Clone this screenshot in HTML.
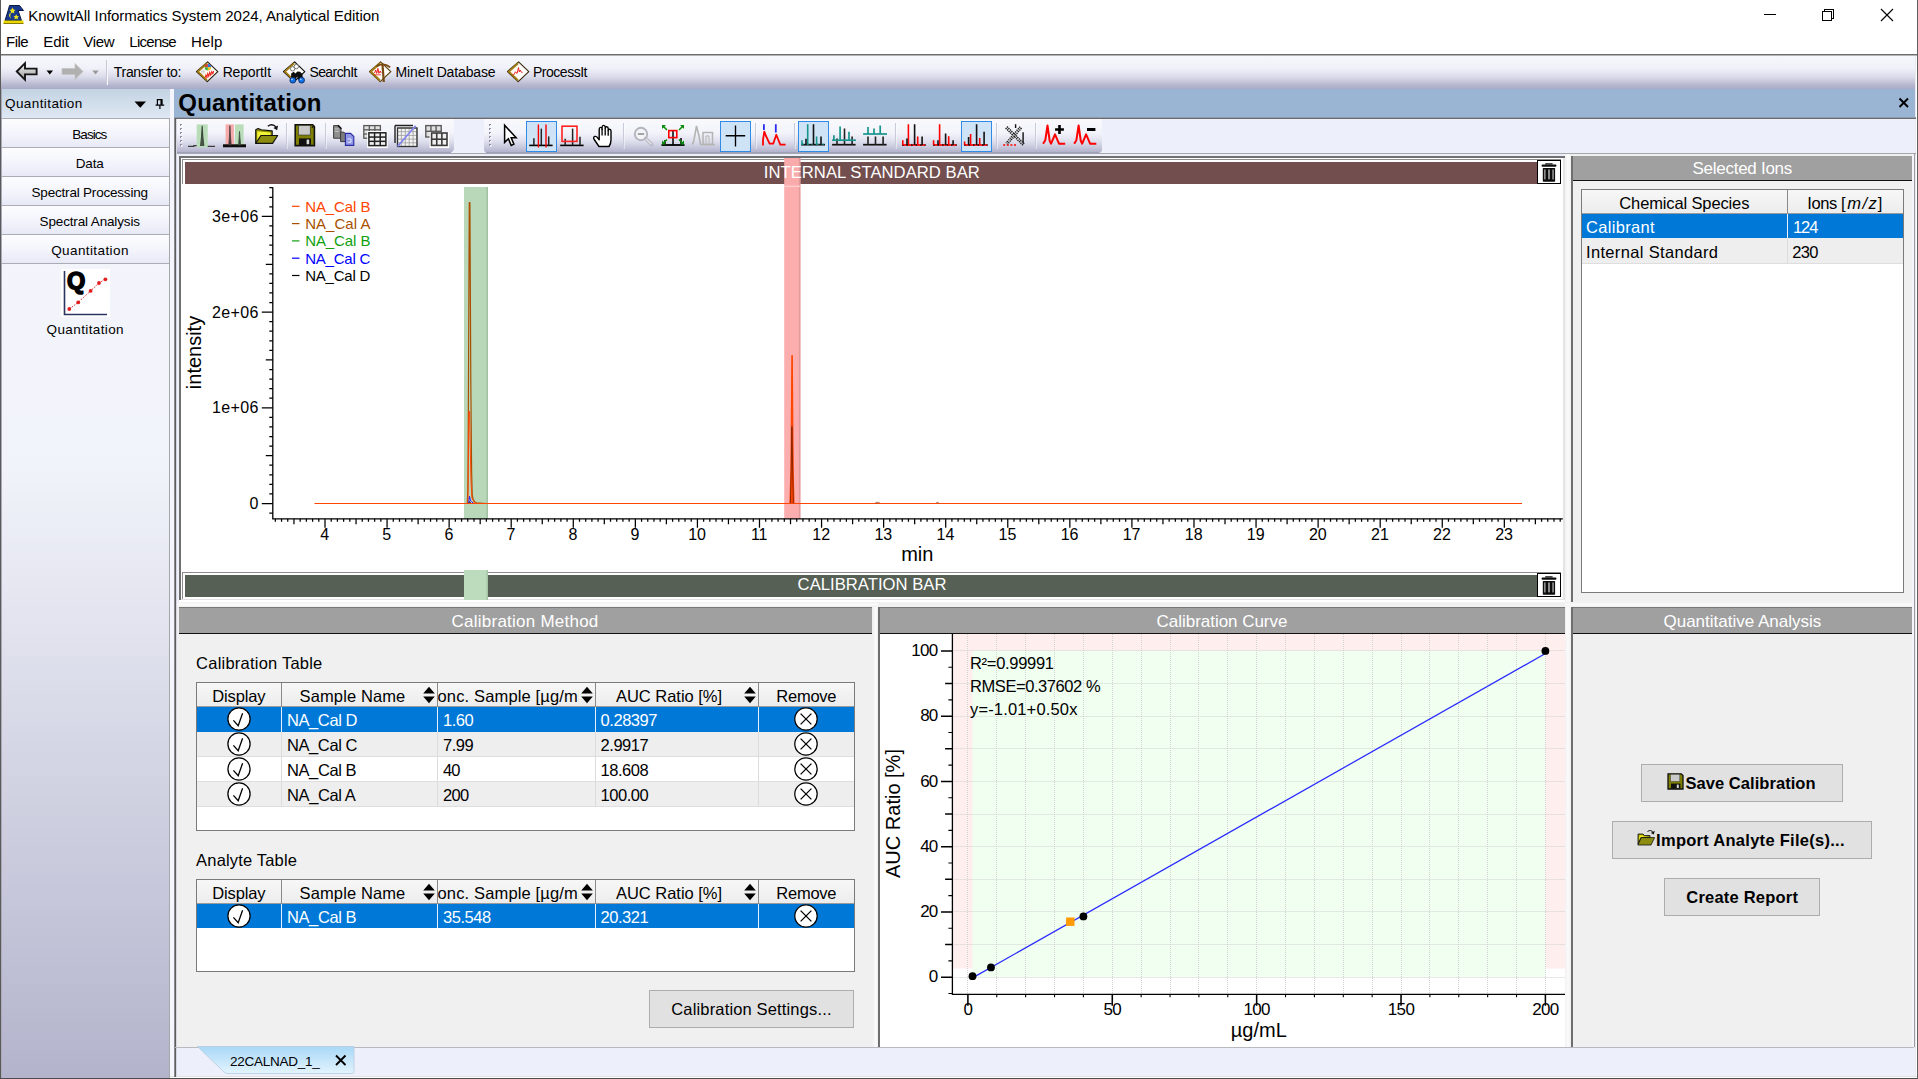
<!DOCTYPE html>
<html lang="en"><head><meta charset="utf-8"><title>KnowItAll Informatics System 2024, Analytical Edition</title>
<style>
html,body{margin:0;padding:0;}
body{width:1918px;height:1079px;overflow:hidden;position:relative;background:#fff;font-family:"Liberation Sans",sans-serif;}
.b{position:absolute;display:block;}
.t{position:absolute;white-space:pre;line-height:normal;font-family:"Liberation Sans",sans-serif;}
svg text{font-family:"Liberation Sans",sans-serif;}
</style></head>
<body>
<div class="b" style="left:0px;top:0px;width:1918px;height:54px;background:#ffffff;"></div>
<svg class="b" style="left:2px;top:3px;" width="24" height="22" viewBox="0 0 24 22">
<path d="M7.5 2.5 L17.5 2.5 L21.5 7.5 L16 7.5 L19.5 17.5 L3 17.5 L6 8 Z" fill="#17388c" stroke="#0a173f" stroke-width="1"/>
<path d="M1.5 17.5 H21.5 V20.5 H1.5 Z" fill="#e8d800"/>
<path d="M1.5 20 H21.5 V21 H1.5 Z" fill="#8a7a00"/>
<path d="M10.5 4.6 l1 2 2 .3 -1.5 1.4 .4 2.1 -1.9 -1 -1.9 1 .4 -2.1 -1.5 -1.4 2 -.3z" fill="#f2e41a"/>
<path d="M7.5 10.5 q-1.5 3.5 2.2 5.3 q-2.6 -2.2 -0.6 -5.3z" fill="#f2e41a"/>
<path d="M14.2 11.2 l.9 1.8 1.9 .2 -1.4 1.3 .4 2 -1.8 -1 -1.8 1 .4 -2 -1.4 -1.3 1.9 -.2z" fill="#f2e41a"/>
</svg>
<span class="t" style="left:28.30px;top:6.80px;font-size:15px;color:#000;letter-spacing:-0.048px;">KnowItAll Informatics System 2024, Analytical Edition</span>
<svg class="b" style="left:1750px;top:0px;" width="168" height="30" viewBox="0 0 168 30">
<path d="M14 14.5 H26" stroke="#000" stroke-width="1" fill="none" shape-rendering="crispEdges"/>
<path d="M72.5 11.5 H81.5 V20.5 H72.5 Z M74.5 11.5 V9.5 H83.5 V18.5 H81.5" stroke="#000" stroke-width="1" fill="none" shape-rendering="crispEdges"/>
<path d="M131 9 L143 21 M143 9 L131 21" stroke="#000" stroke-width="1.1" fill="none"/>
</svg>
<span class="t" style="left:6.00px;top:32.70px;font-size:15px;color:#000;letter-spacing:-0.488px;">File</span>
<span class="t" style="left:43.30px;top:32.70px;font-size:15px;color:#000;letter-spacing:-0.048px;">Edit</span>
<span class="t" style="left:83.30px;top:32.70px;font-size:15px;color:#000;letter-spacing:-0.293px;">View</span>
<span class="t" style="left:129.30px;top:32.70px;font-size:15px;color:#000;letter-spacing:-0.718px;">License</span>
<span class="t" style="left:191.00px;top:32.70px;font-size:15px;color:#000;letter-spacing:0.148px;">Help</span>
<div class="b" style="left:0px;top:54px;width:1918px;height:1px;background:#6e6e6e;"></div>
<div class="b" style="left:0px;top:55px;width:1918px;height:1px;background:#b4b4b4;"></div>
<div class="b" style="left:0px;top:56px;width:1918px;height:33px;background:linear-gradient(#f6f7fc 0%,#f1f2f9 35%,#dcddeb 62%,#b6b7cf 88%,#a9aac6 100%);"></div>
<svg class="b" style="left:12px;top:58px;" width="96" height="28" viewBox="0 0 96 28">
<defs><linearGradient id="ga" x1="0" y1="0" x2="0" y2="1"><stop offset="0" stop-color="#f4f4f4"/><stop offset="1" stop-color="#9a9a9a"/></linearGradient></defs>
<path d="M4.8 13.5 L13 5.2 V10.6 H24.6 V16.4 H13 V21.8 Z" fill="url(#ga)" stroke="#151515" stroke-width="1.9" stroke-linejoin="miter"/>
<path d="M34.5 12.5 h6.5 l-3.25 4z" fill="#000"/>
<path d="M50 10.5 H63 V5.5 L71 13.5 L63 21.5 V16.5 H50 Z" fill="#b0b0b0" stroke="#c4c4c4" stroke-width="0.8"/>
<path d="M80.3 12.5 h6.5 l-3.25 4z" fill="#9a9a9a"/>
</svg>
<div class="b" style="left:106px;top:60px;width:1px;height:25px;background:#c9c9d6;"></div>
<div class="b" style="left:107px;top:60px;width:1px;height:25px;background:#f8f8fc;"></div>
<span class="t" style="left:113.80px;top:63.60px;font-size:14px;color:#000;letter-spacing:-0.306px;">Transfer to:</span>
<svg class="b" style="left:196px;top:60px;" width="23" height="24" viewBox="0 0 23 24"><path d="M11.6 1.9 L21.8 11.6 L11.2 21.6 L0.4 11.6 Z" fill="#fffefa" stroke="#2c2210" stroke-width="1.2" stroke-linejoin="round"/>
<path d="M11.2 3.3 L1.9 11.6 L10.9 20.2" fill="none" stroke="#a47e14" stroke-width="1.9" stroke-linejoin="round"/><path d="M11.9 7.3 V4.1 A3.2 3.2 0 0 0 8.7 7.3Z" fill="#e23a2a"/><path d="M11.9 7.3 H15.1 A3.2 3.2 0 0 0 11.9 4.1Z" fill="#2a72e2"/><path d="M11.9 7.3 H8.7 A3.2 3.2 0 0 0 11.9 10.5Z" fill="#3aae3a"/><path d="M11.9 7.3 V10.5 A3.2 3.2 0 0 0 15.1 7.3Z" fill="#f2c41a"/>
<path d="M5.4 10.2 h3.4 M5.4 11.6 h3.4 M5.4 13 h3.4" stroke="#a4a4a4" stroke-width="0.8" stroke-dasharray="0.9 0.5"/>
<path d="M9.3 17.6 l0.6 -2.4 0.9 2 0.9 -3.6 1 2.6 1 -3.8 1 2.4 1 -3.2 1 1.8 1 -2.4" stroke="#ee2a22" stroke-width="1.1" fill="none"/><path d="M9.6 18.6 L18.4 12.6" stroke="#ee2a22" stroke-width="0.8" stroke-dasharray="1 0.8"/></svg>
<svg class="b" style="left:283px;top:60px;" width="23" height="24" viewBox="0 0 23 24"><path d="M11.6 1.9 L21.8 11.6 L11.2 21.6 L0.4 11.6 Z" fill="#fffefa" stroke="#0c0c0c" stroke-width="1.2" stroke-linejoin="round"/>
<path d="M11.2 3.3 L1.9 11.6 L10.9 20.2" fill="none" stroke="#a47e14" stroke-width="1.9" stroke-linejoin="round"/><circle cx="9.6" cy="8.8" r="2.2" fill="#fff" stroke="#777" stroke-width="1"/><circle cx="13.3" cy="6.6" r="2.2" fill="#fff" stroke="#777" stroke-width="1"/>
<path d="M8.2 13.4 L10.6 11.8 L12.4 13.6 L14.4 11.6 L17 11.8 L19.4 14 L20 20 L15.6 20 L14 16.6 L12.8 20 L8 20 Z" fill="#0c0c0c"/>
<circle cx="9.8" cy="20.2" r="2.9" fill="#1470e6" stroke="#04245c" stroke-width="0.8"/><circle cx="18.6" cy="20.2" r="2.9" fill="#1470e6" stroke="#04245c" stroke-width="0.8"/>
<circle cx="9" cy="19.3" r="0.9" fill="#a8ccff"/><circle cx="17.8" cy="19.3" r="0.9" fill="#a8ccff"/></svg>
<svg class="b" style="left:369px;top:60px;" width="23" height="24" viewBox="0 0 23 24"><path d="M11.6 1.9 L21.8 11.6 L11.2 21.6 L0.4 11.6 Z" fill="#fffefa" stroke="#5c400e" stroke-width="1.2" stroke-linejoin="round"/>
<path d="M11.2 3.3 L1.9 11.6 L10.9 20.2" fill="none" stroke="#a47e14" stroke-width="1.9" stroke-linejoin="round"/><path d="M5.5 13 l1.2 -3 1 3.4 1.2 -5 1 5 1.3 -2.4 1 2" stroke="#e22" stroke-width="1" fill="none"/>
<path d="M5 14.8 h7" stroke="#e22" stroke-width="0.8"/>
<path d="M13.4 3.6 L14.8 22" stroke="#7a4a10" stroke-width="2.2"/>
<path d="M7.5 6.6 Q14 1.9 21.2 7.2" stroke="#7a4a10" stroke-width="1.8" fill="none"/></svg>
<svg class="b" style="left:507px;top:60px;" width="23" height="24" viewBox="0 0 23 24"><path d="M11.6 1.9 L21.8 11.6 L11.2 21.6 L0.4 11.6 Z" fill="#fffefa" stroke="#3c2c10" stroke-width="1.2" stroke-linejoin="round"/>
<path d="M11.2 3.3 L1.9 11.6 L10.9 20.2" fill="none" stroke="#a47e14" stroke-width="1.9" stroke-linejoin="round"/><path d="M5.5 15 q1.5 .5 2.2 -2 q.8 -2.6 1.8 .2 q.6 1.4 1.2 -2.4 l.8 -3.2 .8 4.4 1 -2 1 2.2 1.2 .2" stroke="#e22" stroke-width="1" fill="none"/></svg>
<span class="t" style="left:222.70px;top:63.60px;font-size:14px;color:#000;letter-spacing:-0.185px;">ReportIt</span>
<span class="t" style="left:309.40px;top:63.60px;font-size:14px;color:#000;letter-spacing:-0.577px;">SearchIt</span>
<span class="t" style="left:395.60px;top:63.60px;font-size:14px;color:#000;letter-spacing:-0.139px;">MineIt Database</span>
<span class="t" style="left:533.00px;top:63.60px;font-size:14px;color:#000;letter-spacing:-0.482px;">ProcessIt</span>
<div class="b" style="left:170px;top:89px;width:1748px;height:990px;background:#edeffb;"></div>
<div class="b" style="left:0px;top:89px;width:170px;height:989px;background:linear-gradient(#f3f6fb 0px,#f1f3fa 380px,#b3b4cc 989px);"></div>
<div class="b" style="left:1px;top:89px;width:169px;height:29px;background:linear-gradient(#c3d3e3,#dfe8f3);"></div>
<span class="t" style="left:5.00px;top:96.30px;font-size:13.5px;color:#000;letter-spacing:0.409px;">Quantitation</span>
<svg class="b" style="left:133px;top:96px;" width="34" height="16" viewBox="0 0 34 16"><path d="M1.5 5.5 h11.5 l-5.75 6.2z" fill="#000"/>
<path d="M24.4 3.6 h4.6 v5.4 h-4.6z M22.6 9.2 h8.6 M26.9 9.2 v3.8" stroke="#000" stroke-width="1.2" fill="none"/><path d="M28.3 3.6 v5.4" stroke="#000" stroke-width="1.7"/></svg>
<div class="b" style="left:1px;top:118px;width:169px;height:1px;background:#a9abb5;"></div>
<div class="b" style="left:1px;top:119px;width:169px;height:28px;background:linear-gradient(#fdfdff,#f4f5fc 50%,#e7e9f6);"></div>
<span class="t" style="left:72.30px;top:126.60px;font-size:13.5px;color:#000;letter-spacing:-0.952px;">Basics</span>
<div class="b" style="left:1px;top:147px;width:169px;height:1px;background:#a9abb5;"></div>
<div class="b" style="left:1px;top:148px;width:169px;height:28px;background:linear-gradient(#fdfdff,#f4f5fc 50%,#e7e9f6);"></div>
<span class="t" style="left:75.80px;top:155.60px;font-size:13.5px;color:#000;letter-spacing:-0.175px;">Data</span>
<div class="b" style="left:1px;top:176px;width:169px;height:1px;background:#a9abb5;"></div>
<div class="b" style="left:1px;top:177px;width:169px;height:28px;background:linear-gradient(#fdfdff,#f4f5fc 50%,#e7e9f6);"></div>
<span class="t" style="left:31.55px;top:184.60px;font-size:13.5px;color:#000;letter-spacing:-0.198px;">Spectral Processing</span>
<div class="b" style="left:1px;top:205px;width:169px;height:1px;background:#a9abb5;"></div>
<div class="b" style="left:1px;top:206px;width:169px;height:28px;background:linear-gradient(#fdfdff,#f4f5fc 50%,#e7e9f6);"></div>
<span class="t" style="left:39.55px;top:213.60px;font-size:13.5px;color:#000;letter-spacing:-0.144px;">Spectral Analysis</span>
<div class="b" style="left:1px;top:234px;width:169px;height:1px;background:#a9abb5;"></div>
<div class="b" style="left:1px;top:235px;width:169px;height:28px;background:linear-gradient(#fdfdff,#f4f5fc 50%,#e7e9f6);"></div>
<span class="t" style="left:51.15px;top:242.60px;font-size:13.5px;color:#000;letter-spacing:0.409px;">Quantitation</span>
<div class="b" style="left:1px;top:263px;width:169px;height:1px;background:#a9abb5;"></div>
<svg class="b" style="left:61px;top:269px;" width="49" height="48" viewBox="0 0 49 48"><rect x="0" y="0" width="49" height="48" fill="#fff"/>
<path d="M3.5 2 V45.5 H46" stroke="#2a3560" stroke-width="1.6" fill="none"/>
<path d="M8.3 40 L17.2 33.4 L29.6 21.9 L38 14 L44.4 10.3" stroke="#e02020" stroke-width="1" stroke-dasharray="1.5 1.5" fill="none"/>
<circle cx="8.3" cy="40" r="1.9" fill="#e02020"/><circle cx="17.2" cy="33.4" r="1.9" fill="#e02020"/><circle cx="29.6" cy="21.9" r="1.9" fill="#e02020"/><circle cx="38" cy="14" r="1.9" fill="#e02020"/><circle cx="44.4" cy="10.3" r="1.9" fill="#e02020"/>
<text x="6" y="20.2" font-size="23.5" font-weight="700" fill="#000" stroke="#000" stroke-width="1.5">Q</text></svg>
<span class="t" style="left:46.60px;top:321.60px;font-size:13.5px;color:#000;letter-spacing:0.381px;">Quantitation</span>
<div class="b" style="left:0px;top:0px;width:1px;height:1079px;background:#5a5a5a;"></div>
<div class="b" style="left:1px;top:89px;width:1px;height:989px;background:#a9abb8;"></div>
<div class="b" style="left:169px;top:118px;width:1px;height:960px;background:#a6a8a8;"></div>
<div class="b" style="left:170px;top:89px;width:4px;height:989px;background:#f5f5fd;"></div>
<div class="b" style="left:174px;top:89px;width:1742px;height:28px;background:#9ab4d3;"></div>
<span class="t" style="left:178.30px;top:88.50px;font-size:24px;color:#000;letter-spacing:0.172px;font-weight:700;">Quantitation</span>
<svg class="b" style="left:1897px;top:96px;" width="14" height="14" viewBox="0 0 14 14"><path d="M2.5 2.5 L11 11 M11 2.5 L2.5 11" stroke="#000" stroke-width="1.9" fill="none"/></svg>
<div class="b" style="left:170px;top:1076px;width:1747px;height:1px;background:#e2e2e4;"></div>
<div class="b" style="left:170px;top:1077px;width:1747px;height:1px;background:#fdfdfd;"></div>
<div class="b" style="left:0px;top:1078px;width:1918px;height:1px;background:#4c4c4c;"></div>
<div class="b" style="left:1915px;top:56px;width:1px;height:1020px;background:#e8e8ee;"></div>
<div class="b" style="left:1916px;top:56px;width:1px;height:1020px;background:#ffffff;"></div>
<div class="b" style="left:1917px;top:0px;width:1px;height:1079px;background:#606060;"></div>
<div class="b" style="left:174px;top:117px;width:1742px;height:1px;background:#8f9bb0;"></div>
<div class="b" style="left:175px;top:118px;width:1741px;height:1px;background:#6b6b6b;"></div>
<div class="b" style="left:174px;top:118px;width:1px;height:959px;background:#8c8c90;"></div>
<div class="b" style="left:175px;top:118px;width:1px;height:959px;background:#5e5e5e;"></div>
<div class="b" style="left:176px;top:119px;width:1px;height:958px;background:#d6d6e0;"></div>
<div class="b" style="left:177px;top:119px;width:276.5px;height:34px;background:linear-gradient(#f9f9fd 0%,#f3f4fa 40%,#dfe0ee 65%,#c0c1d7 88%,#adaec8 100%);border-radius:0 0 5px 0;"></div>
<div class="b" style="left:484px;top:119px;width:618px;height:34px;background:linear-gradient(#f9f9fd 0%,#f3f4fa 40%,#dfe0ee 65%,#c0c1d7 88%,#adaec8 100%);border-radius:0 0 4px 4px;"></div>
<div class="b" style="left:177px;top:152px;width:274px;height:1px;background:#9fa0bd;"></div>
<div class="b" style="left:486px;top:152px;width:613px;height:1px;background:#9fa0bd;"></div>
<div class="b" style="left:177px;top:153px;width:1739px;height:1px;background:#a6a9ab;"></div>
<svg class="b" style="left:180px;top:124px;" width="3" height="24" viewBox="0 0 3 24"><rect x="0" y="0" width="2" height="2" fill="#8e8ea4"/><rect x="1" y="1" width="1.5" height="1.5" fill="#fff"/><rect x="0" y="4" width="2" height="2" fill="#8e8ea4"/><rect x="1" y="5" width="1.5" height="1.5" fill="#fff"/><rect x="0" y="8" width="2" height="2" fill="#8e8ea4"/><rect x="1" y="9" width="1.5" height="1.5" fill="#fff"/><rect x="0" y="12" width="2" height="2" fill="#8e8ea4"/><rect x="1" y="13" width="1.5" height="1.5" fill="#fff"/><rect x="0" y="16" width="2" height="2" fill="#8e8ea4"/><rect x="1" y="17" width="1.5" height="1.5" fill="#fff"/><rect x="0" y="20" width="2" height="2" fill="#8e8ea4"/><rect x="1" y="21" width="1.5" height="1.5" fill="#fff"/></svg>
<svg class="b" style="left:489px;top:124px;" width="3" height="24" viewBox="0 0 3 24"><rect x="0" y="0" width="2" height="2" fill="#8e8ea4"/><rect x="1" y="1" width="1.5" height="1.5" fill="#fff"/><rect x="0" y="4" width="2" height="2" fill="#8e8ea4"/><rect x="1" y="5" width="1.5" height="1.5" fill="#fff"/><rect x="0" y="8" width="2" height="2" fill="#8e8ea4"/><rect x="1" y="9" width="1.5" height="1.5" fill="#fff"/><rect x="0" y="12" width="2" height="2" fill="#8e8ea4"/><rect x="1" y="13" width="1.5" height="1.5" fill="#fff"/><rect x="0" y="16" width="2" height="2" fill="#8e8ea4"/><rect x="1" y="17" width="1.5" height="1.5" fill="#fff"/><rect x="0" y="20" width="2" height="2" fill="#8e8ea4"/><rect x="1" y="21" width="1.5" height="1.5" fill="#fff"/></svg>
<div class="b" style="left:286px;top:123px;width:1px;height:26px;background:#c9cada;"></div>
<div class="b" style="left:287px;top:123px;width:1px;height:26px;background:rgba(255,255,255,0.45);"></div>
<div class="b" style="left:325px;top:123px;width:1px;height:26px;background:#c9cada;"></div>
<div class="b" style="left:326px;top:123px;width:1px;height:26px;background:rgba(255,255,255,0.45);"></div>
<div class="b" style="left:623px;top:123px;width:1px;height:26px;background:#c9cada;"></div>
<div class="b" style="left:624px;top:123px;width:1px;height:26px;background:rgba(255,255,255,0.45);"></div>
<div class="b" style="left:755px;top:123px;width:1px;height:26px;background:#c9cada;"></div>
<div class="b" style="left:756px;top:123px;width:1px;height:26px;background:rgba(255,255,255,0.45);"></div>
<div class="b" style="left:794px;top:123px;width:1px;height:26px;background:#c9cada;"></div>
<div class="b" style="left:795px;top:123px;width:1px;height:26px;background:rgba(255,255,255,0.45);"></div>
<div class="b" style="left:895px;top:123px;width:1px;height:26px;background:#c9cada;"></div>
<div class="b" style="left:896px;top:123px;width:1px;height:26px;background:rgba(255,255,255,0.45);"></div>
<div class="b" style="left:996px;top:123px;width:1px;height:26px;background:#c9cada;"></div>
<div class="b" style="left:997px;top:123px;width:1px;height:26px;background:rgba(255,255,255,0.45);"></div>
<div class="b" style="left:1035px;top:123px;width:1px;height:26px;background:#c9cada;"></div>
<div class="b" style="left:1036px;top:123px;width:1px;height:26px;background:rgba(255,255,255,0.45);"></div>
<div class="b" style="left:526px;top:121px;width:31px;height:31px;background:#cfe3f6;border:1px solid #2f8be6;box-sizing:border-box;"></div>
<div class="b" style="left:720px;top:121px;width:31px;height:31px;background:#cfe3f6;border:1px solid #2f8be6;box-sizing:border-box;"></div>
<div class="b" style="left:798px;top:121px;width:31px;height:31px;background:#cfe3f6;border:1px solid #2f8be6;box-sizing:border-box;"></div>
<div class="b" style="left:961px;top:121px;width:31px;height:31px;background:#cfe3f6;border:1px solid #2f8be6;box-sizing:border-box;"></div>
<svg class="b" style="left:190px;top:124px;overflow:visible;" width="24" height="24" viewBox="0 0 24 24"><rect x="6.7" y="0.4" width="11" height="23" fill="#b9dcb9"/>
<path d="M-2 22.4 H3.8 V21.6 H6.7 M17.7 22.4 H25" stroke="#3c3c3c" stroke-width="1.2" fill="none"/>
<path d="M10.6 22 L11.6 12 L12.2 2 L12.8 12 L13.8 22" stroke="#3e4a3e" stroke-width="1.1" fill="#4a554a" stroke-linejoin="round"/></svg>
<svg class="b" style="left:223px;top:124px;overflow:visible;" width="24" height="24" viewBox="0 0 24 24"><rect x="2.6" y="0.4" width="8.3" height="21" fill="#f6abab"/><rect x="12" y="0.4" width="8.6" height="21" fill="#b9dcb9"/>
<path d="M0 21.8 H23" stroke="#0c0c0c" stroke-width="3"/>
<path d="M5.8 21 L6.6 10 L6.9 1.6 L7.3 10 L8.2 21Z" fill="#4a3a3a" stroke="#4a3a3a" stroke-width="0.8"/><path d="M15.6 21 L16.2 13 L16.5 7.4 L16.9 13 L17.6 21Z" fill="#3e4a3e" stroke="#3e4a3e" stroke-width="0.8"/></svg>
<svg class="b" style="left:255px;top:124px;overflow:visible;" width="24" height="24" viewBox="0 0 24 24"><path d="M0.7 19.4 V5.8 L3.2 4.5 L6.3 5.8 L17.2 6.9 V11" fill="#8a8a00" stroke="#111" stroke-width="1.1" stroke-linejoin="round"/>
<path d="M2.2 7.2 L15.6 8.6 V11.2 L6 11.8 L2.2 17.2Z" fill="#f2f236"/>
<path d="M0.7 19.4 L5.9 11.5 H22.7 L17.6 19.4Z" fill="#8c8c10" stroke="#111" stroke-width="1.1" stroke-linejoin="round"/>
<path d="M12.8 2.2 Q17.4 -1.2 21.4 3.4" stroke="#111" stroke-width="1.3" fill="none"/><path d="M23 1.4 L22.2 6.2 L18.4 4Z" fill="#111"/></svg>
<svg class="b" style="left:294px;top:124px;overflow:visible;" width="24" height="24" viewBox="0 0 24 24"><path d="M1.2 0.8 H18.6 L20.4 2.6 V21.6 H1.2Z" fill="#7e7e00" stroke="#111" stroke-width="1.6"/>
<rect x="4.6" y="1.6" width="11.6" height="9.4" fill="#c9c9c9" stroke="#333" stroke-width="0.6"/>
<rect x="5" y="14.4" width="12" height="6.8" fill="#111"/><rect x="12.6" y="15.6" width="2.6" height="4.6" fill="#dcdcdc"/>
<rect x="17.8" y="2.4" width="1.3" height="1.5" fill="#111"/></svg>
<svg class="b" style="left:333px;top:124px;overflow:visible;" width="24" height="24" viewBox="0 0 24 24"><path d="M0.6 1.6 H5.4 L8 4.2 V14.2 H0.6Z" fill="#8e8e8e" stroke="#3a3a3a" stroke-width="1"/><path d="M1.8 5 h4 M1.8 7.4 h4" stroke="#c8c8c8" stroke-width="1"/><path d="M5 1.4 L8.4 4.8" stroke="#111" stroke-width="1.6"/>
<path d="M7.6 8.2 H11 L13.2 10.4 V17.6 H7.6Z" fill="#7c7c7c" stroke="#3a3a3a" stroke-width="1"/>
<path d="M12.4 9.4 H17.6 L20.8 12.6 V21.4 H12.4Z" fill="#9098e4" stroke="#2a2aa4" stroke-width="1.1"/><path d="M14.6 15 h3.4 v3.2 h-3.4" fill="none" stroke="#e4e6ff" stroke-width="1"/></svg>
<svg class="b" style="left:363px;top:124px;overflow:visible;" width="24" height="24" viewBox="0 0 24 24"><rect x="0.8" y="1.6" width="16.6" height="12.6" fill="#e2e2e2" stroke="#5a5a5a" stroke-width="1.3"/><path d="M6.33333 1.6 v12.6" stroke="#5a5a5a" stroke-width="1.3"/><path d="M11.8667 1.6 v12.6" stroke="#5a5a5a" stroke-width="1.3"/><path d="M0.8 5.8 h16.6" stroke="#5a5a5a" stroke-width="1.3"/><path d="M0.8 10 h16.6" stroke="#5a5a5a" stroke-width="1.3"/><rect x="4.2" y="7" width="20.4" height="17" fill="#fff"/><rect x="5.9" y="8.8" width="17" height="12.8" fill="#f0f0f0" stroke="#222" stroke-width="1.5"/><path d="M11.5667 8.8 v12.8" stroke="#222" stroke-width="1.5"/><path d="M17.2333 8.8 v12.8" stroke="#222" stroke-width="1.5"/><path d="M5.9 13.0667 h17" stroke="#222" stroke-width="1.5"/><path d="M5.9 17.3333 h17" stroke="#222" stroke-width="1.5"/></svg>
<svg class="b" style="left:394px;top:124px;overflow:visible;" width="24" height="24" viewBox="0 0 24 24"><path d="M1 1.5 H19 M1 1.5 V19" stroke="#222" stroke-width="1.4" fill="none"/><rect x="3.5" y="4" width="19.5" height="18.5" fill="#f4f4f4" stroke="#9a9a9a" stroke-width="0.8"/><path d="M7.4 4 v18.5" stroke="#9a9a9a" stroke-width="0.8"/><path d="M11.3 4 v18.5" stroke="#9a9a9a" stroke-width="0.8"/><path d="M15.2 4 v18.5" stroke="#9a9a9a" stroke-width="0.8"/><path d="M19.1 4 v18.5" stroke="#9a9a9a" stroke-width="0.8"/><path d="M3.5 7.7 h19.5" stroke="#9a9a9a" stroke-width="0.8"/><path d="M3.5 11.4 h19.5" stroke="#9a9a9a" stroke-width="0.8"/><path d="M3.5 15.1 h19.5" stroke="#9a9a9a" stroke-width="0.8"/><path d="M3.5 18.8 h19.5" stroke="#9a9a9a" stroke-width="0.8"/><rect x="3.5" y="4" width="19.5" height="18.5" fill="none" stroke="#333" stroke-width="1.3"/><path d="M3.6 22.4 L21.6 1.8" stroke="#8585f2" stroke-width="1.7"/></svg>
<svg class="b" style="left:425px;top:124px;overflow:visible;" width="24" height="24" viewBox="0 0 24 24"><rect x="0.8" y="1.6" width="15.4" height="11.4" fill="#e0e0e0" stroke="#5a5a5a" stroke-width="1.4"/><path d="M5.93333 1.6 v11.4" stroke="#5a5a5a" stroke-width="1.4"/><path d="M11.0667 1.6 v11.4" stroke="#5a5a5a" stroke-width="1.4"/><path d="M0.8 7.3 h15.4" stroke="#5a5a5a" stroke-width="1.4"/><rect x="4.6" y="8" width="19.6" height="16" fill="#fff"/><rect x="6.6" y="9" width="15.4" height="12.4" fill="#f0f0f0" stroke="#3a3a3a" stroke-width="1.6"/><path d="M11.7333 9 v12.4" stroke="#3a3a3a" stroke-width="1.6"/><path d="M16.8667 9 v12.4" stroke="#3a3a3a" stroke-width="1.6"/><path d="M6.6 15.2 h15.4" stroke="#3a3a3a" stroke-width="1.6"/></svg>
<svg class="b" style="left:503px;top:124px;overflow:visible;" width="24" height="24" viewBox="0 0 24 24"><path d="M1.6 1.2 V18.4 L5.4 14.8 L8.2 21.4 L10.9 20.2 L8.2 13.8 L13.2 13.8 Z" fill="#fff" stroke="#000" stroke-width="1.5" stroke-linejoin="miter"/></svg>
<svg class="b" style="left:529px;top:124px;overflow:visible;" width="24" height="24" viewBox="0 0 24 24"><path d="M0.2 21.4 H23.6" stroke="#000" stroke-width="1.6"/><path d="M4.9 21.4 v-7.1" stroke="#222" stroke-width="1.5"/><path d="M12.3 21.4 v-16.8" stroke="#222" stroke-width="1.5"/><path d="M19.7 21.4 v-9" stroke="#222" stroke-width="1.5"/><path d="M9.4 0.4 V23.6 M17 0.4 V23.6" stroke="#f00" stroke-width="1.4"/></svg>
<svg class="b" style="left:560px;top:124px;overflow:visible;" width="24" height="24" viewBox="0 0 24 24"><path d="M0.2 21.4 H23.6" stroke="#000" stroke-width="1.6"/><path d="M5.2 21.4 v-6.7" stroke="#222" stroke-width="1.5"/><path d="M12.6 21.4 v-16.8" stroke="#222" stroke-width="1.5"/><path d="M20 21.4 v-8.6" stroke="#222" stroke-width="1.5"/><rect x="2" y="2.2" width="15" height="15.2" fill="none" stroke="#f22" stroke-width="1.6"/></svg>
<svg class="b" style="left:592px;top:124px;overflow:visible;" width="24" height="24" viewBox="0 0 24 24"><path d="M7 22.5 L2.2 15.5 Q0.8 13.2 2.8 12.4 Q4.4 12 5.8 14 L7.2 15.8 V5.2 Q7.2 3.4 8.7 3.4 Q10.1 3.4 10.1 5.2 V3.2 Q10.1 1.4 11.7 1.4 Q13.2 1.4 13.2 3.2 V4.4 Q13.2 2.8 14.7 2.8 Q16.2 2.8 16.2 4.6 V6.6 Q16.2 5.2 17.6 5.2 Q19 5.2 19 7 V16 Q19 19.5 17 22.5 Z" fill="#fff" stroke="#000" stroke-width="1.4" stroke-linejoin="round"/>
<path d="M10.1 5 V11.5 M13.2 4.5 V11.5 M16.2 6.5 V11.8" stroke="#000" stroke-width="1.3"/></svg>
<svg class="b" style="left:632px;top:124px;overflow:visible;" width="24" height="24" viewBox="0 0 24 24"><circle cx="9" cy="10" r="6.2" fill="#f4f4f8" stroke="#b4b4be" stroke-width="1.9"/><path d="M5.8 10 H12.2" stroke="#a4a4a4" stroke-width="2"/>
<path d="M13.6 14.6 L19.6 20.6" stroke="#b9b9c4" stroke-width="3.6" stroke-linecap="round"/><path d="M14 15 L19.4 20.4" stroke="#e8e8ee" stroke-width="1.3"/></svg>
<svg class="b" style="left:661px;top:124px;overflow:visible;" width="24" height="24" viewBox="0 0 24 24"><path d="M0.5 21 H23.5" stroke="#000" stroke-width="1.8"/><path d="M4 21 v-5 M12 21 V6 M20 21 v-7" stroke="#000" stroke-width="1.5"/>
<rect x="7.8" y="6.6" width="8" height="7" fill="none" stroke="#f00" stroke-width="1.6"/>
<g stroke="#0a8a0a" stroke-width="1.5" fill="#0a8a0a"><path d="M6 6 L1.5 1.5 M18 6 L22.5 1.5 M6 15.5 L1.5 20 M18 15.5 L22.5 20" fill="none"/><path d="M1 1 h4 l-4 4z M23 1 h-4 l4 4z M1 20.5 v-4 l4 4z M23 20.5 v-4 l-4 4z" stroke="none"/></g></svg>
<svg class="b" style="left:692px;top:124px;overflow:visible;" width="24" height="24" viewBox="0 0 24 24"><path d="M0.5 20.5 L2 16 L4.5 2 L7 12 L8.5 20.5 M8.5 20.5 H23" stroke="#b4b4b4" stroke-width="1.6" fill="none"/>
<rect x="11" y="8.5" width="9.5" height="12" fill="none" stroke="#b4b4b4" stroke-width="1.5"/><path d="M14 12 v8 M17 12 v8 M14 12 h3" stroke="#c0c0c0" stroke-width="1.3" fill="none"/></svg>
<svg class="b" style="left:724px;top:124px;overflow:visible;" width="24" height="24" viewBox="0 0 24 24"><path d="M11.5 1.5 V22.4 M1.7 11.7 H21.2" stroke="#000" stroke-width="1.35"/></svg>
<svg class="b" style="left:762px;top:124px;overflow:visible;" width="24" height="24" viewBox="0 0 24 24"><path d="M1 21.5 V16 L2.3 7.6 L4 12 L7.6 19.7 H11.2 L14.3 10.8 L15.6 14 L18.3 20.6 H23.6" stroke="#f00" stroke-width="1.8" fill="none" stroke-linejoin="round"/><path d="M1.9 0.2 V6 M13.8 0.2 V8.6" stroke="#2a2af0" stroke-width="1.8"/></svg>
<svg class="b" style="left:801px;top:124px;overflow:visible;" width="24" height="24" viewBox="0 0 24 24"><path d="M0.1 20.7 H24" stroke="#111" stroke-width="1.7"/><path d="M0.1 20.2 H24" stroke="#17958c" stroke-width="0.9" stroke-dasharray="3 2"/><path d="M1 20.7 V16.2 M6.7 20.7 V0.2 M15.6 20.7 V12.6" stroke="#17958c" stroke-width="1.6" fill="none"/><path d="M5 20.7 V14.8 M12.5 20.7 V0.2 M20 20.7 V12.6" stroke="#111" stroke-width="1.6" fill="none"/></svg>
<svg class="b" style="left:832px;top:124px;overflow:visible;" width="24" height="24" viewBox="0 0 24 24"><path d="M0.1 20.7 H23.6" stroke="#111" stroke-width="1.7"/><path d="M5 20.7 V14.4 M12.5 20.7 V4.6 M20.1 20.7 V12.6" stroke="#222" stroke-width="1.6" fill="none"/><path d="M0.1 16.2 H23.9" stroke="#17958c" stroke-width="1.7"/><path d="M1.9 16.2 V11.3 M8.1 16.2 V2.4 M17 16.2 V7.7" stroke="#17958c" stroke-width="1.7" fill="none"/></svg>
<svg class="b" style="left:863px;top:124px;overflow:visible;" width="24" height="24" viewBox="0 0 24 24"><path d="M0.1 20.7 H23.6" stroke="#111" stroke-width="1.7"/><path d="M5 20.7 V12.6 M12.5 20.7 V12.6 M20.1 20.7 V12.6" stroke="#222" stroke-width="1.6" fill="none"/><path d="M0.1 10 H24" stroke="#17958c" stroke-width="1.7"/><path d="M5 10 V2.9 M11 10 V4.6 M17.2 10 V1.5" stroke="#17958c" stroke-width="1.7" fill="none"/></svg>
<svg class="b" style="left:902px;top:124px;overflow:visible;" width="24" height="24" viewBox="0 0 24 24"><path d="M0.1 21 H23.6" stroke="#ff0000" stroke-width="1.7"/><path d="M0.1 21 H23.6" stroke="#111" stroke-width="1.7" stroke-dasharray="1.5 3"/><path d="M0.8 21 V16.2 M6.4 21 V0.2 M15.7 21 V12.6" stroke="#ff0000" stroke-width="1.6" fill="none"/><path d="M5 21 V14.4 M12.6 21 V0.2 M20.1 21 V12.6" stroke="#111" stroke-width="1.6" fill="none"/></svg>
<svg class="b" style="left:933px;top:124px;overflow:visible;" width="24" height="24" viewBox="0 0 24 24"><path d="M0.1 21 H23.6" stroke="#ff0000" stroke-width="1.7"/><path d="M0.1 21 H23.6" stroke="#111" stroke-width="1.7" stroke-dasharray="1.5 3"/><path d="M0.6 21 V16.2 M6.6 21 V0.2 M15.7 21 V12.2" stroke="#ff0000" stroke-width="1.6" fill="none"/><path d="M5 21 V16.2 M12.6 21 V9.5 M20.1 21 V16.2" stroke="#111" stroke-width="1.6" fill="none"/></svg>
<svg class="b" style="left:964px;top:124px;overflow:visible;" width="24" height="24" viewBox="0 0 24 24"><path d="M0.1 21 H23.6" stroke="#ff0000" stroke-width="1.7"/><path d="M0.1 21 H23.6" stroke="#111" stroke-width="1.7" stroke-dasharray="1.5 3"/><path d="M0.6 21 V17.5 M6.6 21 V10 M15.7 21 V14" stroke="#ff0000" stroke-width="1.6" fill="none"/><path d="M4.6 21 V13 M12.6 21 V0.2 M20.1 21 V7.7" stroke="#111" stroke-width="1.6" fill="none"/></svg>
<svg class="b" style="left:1002px;top:124px;overflow:visible;" width="24" height="24" viewBox="0 0 24 24"><path d="M1.2 21 H15.4" stroke="#f00" stroke-width="1.6" stroke-dasharray="2 1.6"/><path d="M13.6 0.2 V4 M21.1 8.2 V19.7" stroke="#111" stroke-width="1.4"/>
<path d="M4.3 3.3 L21.6 20.6 M18.9 3.3 L4.7 19.7" stroke="#262626" stroke-width="3.4" stroke-dasharray="1.3 0.8"/><path d="M4.3 3.3 L21.6 20.6 M18.9 3.3 L4.7 19.7" stroke="#f4f4f4" stroke-width="0.9" stroke-dasharray="1 1.1"/></svg>
<svg class="b" style="left:1042px;top:124px;overflow:visible;" width="24" height="24" viewBox="0 0 24 24"><path d="M1.1 19.7 L3.3 16.2 L5.5 1.5 L7.7 17 L9.1 19.7 L13 10.4 L15.7 16.6 L17 19.7 H23.2" stroke="#f00" stroke-width="2" fill="none" stroke-linejoin="round"/><path d="M13.1 5.5 H21.9 M17.5 1.1 V9.9" stroke="#000" stroke-width="2.6"/></svg>
<svg class="b" style="left:1074px;top:124px;overflow:visible;" width="24" height="24" viewBox="0 0 24 24"><path d="M0.2 19.7 L2.4 16.2 L4.6 1.5 L6.8 17 L8.2 19.7 L12.1 10.4 L14.8 16.6 L16.1 19.7 H22.3" stroke="#f00" stroke-width="2" fill="none" stroke-linejoin="round"/><path d="M13 5.5 H21.4" stroke="#000" stroke-width="3"/></svg>
<div class="b" style="left:177px;top:602px;width:696px;height:445px;background:#f0f0f0;"></div>
<div class="b" style="left:179px;top:607px;width:693px;height:27px;background:#a0a0a0;"></div><div class="b" style="left:179px;top:607px;width:693px;height:1px;background:#777777;"></div><div class="b" style="left:179px;top:632.6px;width:693px;height:1.4px;background:#111;"></div><span class="t" style="left:451.60px;top:611.80px;font-size:17px;color:#fff;letter-spacing:0.235px;">Calibration Method</span>
<span class="t" style="left:196.10px;top:654.00px;font-size:16.5px;color:#000;letter-spacing:0.224px;">Calibration Table</span>
<div class="b" style="left:196px;top:682px;width:659px;height:149px;background:#fff;border:1px solid #7a7a7a;box-sizing:border-box;"></div>
<div class="b" style="left:197px;top:683px;width:657px;height:23.5px;background:linear-gradient(#f7f7f7,#ececec);"></div>
<div class="b" style="left:197px;top:705.7px;width:657px;height:1px;background:#9a9a9a;"></div>
<div class="b" style="left:281px;top:683px;width:1px;height:23.5px;background:#8a8a8a;"></div>
<div class="b" style="left:437px;top:683px;width:1px;height:23.5px;background:#8a8a8a;"></div>
<div class="b" style="left:595px;top:683px;width:1px;height:23.5px;background:#8a8a8a;"></div>
<div class="b" style="left:758px;top:683px;width:1px;height:23.5px;background:#8a8a8a;"></div>
<span class="t" style="left:212.30px;top:686.60px;font-size:16.5px;color:#000;letter-spacing:-0.151px;">Display</span>
<span class="t" style="left:299.60px;top:686.60px;font-size:16.5px;color:#000;letter-spacing:0.116px;">Sample Name</span>
<svg class="b" style="left:421.8px;top:686px;" width="14" height="18" viewBox="0 0 14 18"><path d="M1.2 7.6 L7 0.8 L12.8 7.6Z M1.2 10.6 L7 17.2 L12.8 10.6Z" fill="#000"/></svg>
<div class="b" style="left:438px;top:683px;width:141.2px;height:22.5px;overflow:hidden;"><span class="t" style="left:-12.60px;top:3.60px;font-size:16.5px;color:#000;letter-spacing:0.154px;">Conc. Sample [µg/mL]</span></div>
<svg class="b" style="left:580.2px;top:686px;" width="14" height="18" viewBox="0 0 14 18"><path d="M1.2 7.6 L7 0.8 L12.8 7.6Z M1.2 10.6 L7 17.2 L12.8 10.6Z" fill="#000"/></svg>
<span class="t" style="left:616.00px;top:686.60px;font-size:16.5px;color:#000;letter-spacing:-0.030px;">AUC Ratio [%]</span>
<svg class="b" style="left:742.5px;top:686px;" width="14" height="18" viewBox="0 0 14 18"><path d="M1.2 7.6 L7 0.8 L12.8 7.6Z M1.2 10.6 L7 17.2 L12.8 10.6Z" fill="#000"/></svg>
<span class="t" style="left:776.30px;top:686.60px;font-size:16.5px;color:#000;letter-spacing:-0.249px;">Remove</span>
<div class="b" style="left:197px;top:706.5px;width:657px;height:25px;background:#0078d7;"></div>
<div class="b" style="left:281px;top:706.5px;width:1px;height:25px;background:#e8f1fb;"></div>
<div class="b" style="left:437px;top:706.5px;width:1px;height:25px;background:#e8f1fb;"></div>
<div class="b" style="left:595px;top:706.5px;width:1px;height:25px;background:#e8f1fb;"></div>
<div class="b" style="left:758px;top:706.5px;width:1px;height:25px;background:#e8f1fb;"></div>
<svg class="b" style="left:226.5px;top:706.9px;" width="24" height="24" viewBox="0 0 24 24"><circle cx="12" cy="12" r="11.1" fill="#fff" stroke="#000" stroke-width="1.25"/><path d="M6.4 13.4 L11.2 18.8 L15.6 6.2" fill="none" stroke="#000" stroke-width="1.3"/></svg>
<span class="t" style="left:287.00px;top:710.90px;font-size:16.5px;color:#fff;letter-spacing:-0.409px;">NA_Cal D</span>
<span class="t" style="left:443.00px;top:710.90px;font-size:16.5px;color:#fff;letter-spacing:-0.501px;">1.60</span>
<span class="t" style="left:600.60px;top:710.90px;font-size:16.5px;color:#fff;letter-spacing:-0.468px;">0.28397</span>
<svg class="b" style="left:794px;top:706.9px;" width="24" height="24" viewBox="0 0 24 24"><circle cx="12" cy="12" r="11.2" fill="#fff" stroke="#000" stroke-width="1.25"/><path d="M6.6 6.6 L17.4 17.4 M17.4 6.6 L6.6 17.4" fill="none" stroke="#000" stroke-width="1.3"/></svg>
<div class="b" style="left:197px;top:731.5px;width:657px;height:25px;background:#eeeeee;"></div>
<div class="b" style="left:197px;top:755.9px;width:657px;height:0.8px;background:#dedede;"></div>
<div class="b" style="left:281px;top:731.5px;width:1px;height:25px;background:#dcdcdc;"></div>
<div class="b" style="left:437px;top:731.5px;width:1px;height:25px;background:#dcdcdc;"></div>
<div class="b" style="left:595px;top:731.5px;width:1px;height:25px;background:#dcdcdc;"></div>
<div class="b" style="left:758px;top:731.5px;width:1px;height:25px;background:#dcdcdc;"></div>
<svg class="b" style="left:226.5px;top:731.9px;" width="24" height="24" viewBox="0 0 24 24"><circle cx="12" cy="12" r="11.1" fill="#fff" stroke="#000" stroke-width="1.25"/><path d="M6.4 13.4 L11.2 18.8 L15.6 6.2" fill="none" stroke="#000" stroke-width="1.3"/></svg>
<span class="t" style="left:287.00px;top:735.90px;font-size:16.5px;color:#000;letter-spacing:-0.409px;">NA_Cal C</span>
<span class="t" style="left:443.00px;top:735.90px;font-size:16.5px;color:#000;letter-spacing:-0.501px;">7.99</span>
<span class="t" style="left:600.60px;top:735.90px;font-size:16.5px;color:#000;letter-spacing:-0.476px;">2.9917</span>
<svg class="b" style="left:794px;top:731.9px;" width="24" height="24" viewBox="0 0 24 24"><circle cx="12" cy="12" r="11.2" fill="#fff" stroke="#000" stroke-width="1.25"/><path d="M6.6 6.6 L17.4 17.4 M17.4 6.6 L6.6 17.4" fill="none" stroke="#000" stroke-width="1.3"/></svg>
<div class="b" style="left:197px;top:756.5px;width:657px;height:25px;background:#fff;"></div>
<div class="b" style="left:197px;top:780.9px;width:657px;height:0.8px;background:#dedede;"></div>
<div class="b" style="left:281px;top:756.5px;width:1px;height:25px;background:#dcdcdc;"></div>
<div class="b" style="left:437px;top:756.5px;width:1px;height:25px;background:#dcdcdc;"></div>
<div class="b" style="left:595px;top:756.5px;width:1px;height:25px;background:#dcdcdc;"></div>
<div class="b" style="left:758px;top:756.5px;width:1px;height:25px;background:#dcdcdc;"></div>
<svg class="b" style="left:226.5px;top:756.9px;" width="24" height="24" viewBox="0 0 24 24"><circle cx="12" cy="12" r="11.1" fill="#fff" stroke="#000" stroke-width="1.25"/><path d="M6.4 13.4 L11.2 18.8 L15.6 6.2" fill="none" stroke="#000" stroke-width="1.3"/></svg>
<span class="t" style="left:287.00px;top:760.90px;font-size:16.5px;color:#000;letter-spacing:-0.404px;">NA_Cal B</span>
<span class="t" style="left:443.00px;top:760.90px;font-size:16.5px;color:#000;letter-spacing:-0.857px;">40</span>
<span class="t" style="left:600.60px;top:760.90px;font-size:16.5px;color:#000;letter-spacing:-0.476px;">18.608</span>
<svg class="b" style="left:794px;top:756.9px;" width="24" height="24" viewBox="0 0 24 24"><circle cx="12" cy="12" r="11.2" fill="#fff" stroke="#000" stroke-width="1.25"/><path d="M6.6 6.6 L17.4 17.4 M17.4 6.6 L6.6 17.4" fill="none" stroke="#000" stroke-width="1.3"/></svg>
<div class="b" style="left:197px;top:781.5px;width:657px;height:25px;background:#eeeeee;"></div>
<div class="b" style="left:197px;top:805.9px;width:657px;height:0.8px;background:#dedede;"></div>
<div class="b" style="left:281px;top:781.5px;width:1px;height:25px;background:#dcdcdc;"></div>
<div class="b" style="left:437px;top:781.5px;width:1px;height:25px;background:#dcdcdc;"></div>
<div class="b" style="left:595px;top:781.5px;width:1px;height:25px;background:#dcdcdc;"></div>
<div class="b" style="left:758px;top:781.5px;width:1px;height:25px;background:#dcdcdc;"></div>
<svg class="b" style="left:226.5px;top:781.9px;" width="24" height="24" viewBox="0 0 24 24"><circle cx="12" cy="12" r="11.1" fill="#fff" stroke="#000" stroke-width="1.25"/><path d="M6.4 13.4 L11.2 18.8 L15.6 6.2" fill="none" stroke="#000" stroke-width="1.3"/></svg>
<span class="t" style="left:287.00px;top:785.90px;font-size:16.5px;color:#000;letter-spacing:-0.397px;">NA_Cal A</span>
<span class="t" style="left:443.00px;top:785.90px;font-size:16.5px;color:#000;letter-spacing:-0.643px;">200</span>
<span class="t" style="left:600.60px;top:785.90px;font-size:16.5px;color:#000;letter-spacing:-0.476px;">100.00</span>
<svg class="b" style="left:794px;top:781.9px;" width="24" height="24" viewBox="0 0 24 24"><circle cx="12" cy="12" r="11.2" fill="#fff" stroke="#000" stroke-width="1.25"/><path d="M6.6 6.6 L17.4 17.4 M17.4 6.6 L6.6 17.4" fill="none" stroke="#000" stroke-width="1.3"/></svg>
<span class="t" style="left:196.10px;top:850.70px;font-size:16.5px;color:#000;letter-spacing:0.178px;">Analyte Table</span>
<div class="b" style="left:196px;top:879px;width:659px;height:93px;background:#fff;border:1px solid #7a7a7a;box-sizing:border-box;"></div>
<div class="b" style="left:197px;top:880px;width:657px;height:23.5px;background:linear-gradient(#f7f7f7,#ececec);"></div>
<div class="b" style="left:197px;top:902.7px;width:657px;height:1px;background:#9a9a9a;"></div>
<div class="b" style="left:281px;top:880px;width:1px;height:23.5px;background:#8a8a8a;"></div>
<div class="b" style="left:437px;top:880px;width:1px;height:23.5px;background:#8a8a8a;"></div>
<div class="b" style="left:595px;top:880px;width:1px;height:23.5px;background:#8a8a8a;"></div>
<div class="b" style="left:758px;top:880px;width:1px;height:23.5px;background:#8a8a8a;"></div>
<span class="t" style="left:212.30px;top:883.60px;font-size:16.5px;color:#000;letter-spacing:-0.151px;">Display</span>
<span class="t" style="left:299.60px;top:883.60px;font-size:16.5px;color:#000;letter-spacing:0.116px;">Sample Name</span>
<svg class="b" style="left:421.8px;top:883px;" width="14" height="18" viewBox="0 0 14 18"><path d="M1.2 7.6 L7 0.8 L12.8 7.6Z M1.2 10.6 L7 17.2 L12.8 10.6Z" fill="#000"/></svg>
<div class="b" style="left:438px;top:880px;width:141.2px;height:22.5px;overflow:hidden;"><span class="t" style="left:-12.60px;top:3.60px;font-size:16.5px;color:#000;letter-spacing:0.154px;">Conc. Sample [µg/mL]</span></div>
<svg class="b" style="left:580.2px;top:883px;" width="14" height="18" viewBox="0 0 14 18"><path d="M1.2 7.6 L7 0.8 L12.8 7.6Z M1.2 10.6 L7 17.2 L12.8 10.6Z" fill="#000"/></svg>
<span class="t" style="left:616.00px;top:883.60px;font-size:16.5px;color:#000;letter-spacing:-0.030px;">AUC Ratio [%]</span>
<svg class="b" style="left:742.5px;top:883px;" width="14" height="18" viewBox="0 0 14 18"><path d="M1.2 7.6 L7 0.8 L12.8 7.6Z M1.2 10.6 L7 17.2 L12.8 10.6Z" fill="#000"/></svg>
<span class="t" style="left:776.30px;top:883.60px;font-size:16.5px;color:#000;letter-spacing:-0.249px;">Remove</span>
<div class="b" style="left:197px;top:903.5px;width:657px;height:24.3px;background:#0078d7;"></div>
<div class="b" style="left:281px;top:903.5px;width:1px;height:24.3px;background:#e8f1fb;"></div>
<div class="b" style="left:437px;top:903.5px;width:1px;height:24.3px;background:#e8f1fb;"></div>
<div class="b" style="left:595px;top:903.5px;width:1px;height:24.3px;background:#e8f1fb;"></div>
<div class="b" style="left:758px;top:903.5px;width:1px;height:24.3px;background:#e8f1fb;"></div>
<svg class="b" style="left:226.5px;top:903.9px;" width="24" height="24" viewBox="0 0 24 24"><circle cx="12" cy="12" r="11.1" fill="#fff" stroke="#000" stroke-width="1.25"/><path d="M6.4 13.4 L11.2 18.8 L15.6 6.2" fill="none" stroke="#000" stroke-width="1.3"/></svg>
<span class="t" style="left:287.00px;top:907.90px;font-size:16.5px;color:#fff;letter-spacing:-0.404px;">NA_Cal B</span>
<span class="t" style="left:443.00px;top:907.90px;font-size:16.5px;color:#fff;letter-spacing:-0.476px;">35.548</span>
<span class="t" style="left:600.60px;top:907.90px;font-size:16.5px;color:#fff;letter-spacing:-0.476px;">20.321</span>
<svg class="b" style="left:794px;top:903.9px;" width="24" height="24" viewBox="0 0 24 24"><circle cx="12" cy="12" r="11.2" fill="#fff" stroke="#000" stroke-width="1.25"/><path d="M6.6 6.6 L17.4 17.4 M17.4 6.6 L6.6 17.4" fill="none" stroke="#000" stroke-width="1.3"/></svg>
<div class="b" style="left:649px;top:990px;width:205px;height:38px;background:#e1e1e1;border:1px solid #adadad;box-sizing:border-box;"></div>
<span class="t" style="left:671.30px;top:999.70px;font-size:16.5px;color:#000;letter-spacing:0.153px;">Calibration Settings...</span>
<div class="b" style="left:873px;top:602px;width:5px;height:445px;background:linear-gradient(90deg,#f0f0f0,#fbfbfb 50%,#f0f0f0);"></div>
<div class="b" style="left:1565px;top:154px;width:6px;height:893px;background:linear-gradient(90deg,#f0f0f0,#fbfbfb 50%,#f0f0f0);"></div>
<div class="b" style="left:177px;top:602px;width:1736px;height:5px;background:linear-gradient(#f0f0f0,#fafafa 50%,#f0f0f0);"></div>
<div class="b" style="left:1571px;top:154px;width:342px;height:448px;background:#f0f0f0;"></div>
<div class="b" style="left:1571px;top:156px;width:1.6px;height:446px;background:#6e6e6e;"></div>
<div class="b" style="left:1572.6px;top:156px;width:339.4px;height:25.2px;background:#a0a0a0;"></div><div class="b" style="left:1572.6px;top:179.8px;width:339.4px;height:1.4px;background:#111;"></div><span class="t" style="left:1692.50px;top:158.80px;font-size:17px;color:#fff;letter-spacing:-0.268px;">Selected Ions</span>
<div class="b" style="left:1581px;top:189px;width:322.5px;height:403.5px;background:#fff;border:1px solid #7a7a7a;box-sizing:border-box;"></div>
<div class="b" style="left:1582px;top:190px;width:320.5px;height:23.5px;background:linear-gradient(#f7f7f7,#ececec);"></div>
<div class="b" style="left:1582px;top:212.8px;width:320.5px;height:1px;background:#9a9a9a;"></div>
<div class="b" style="left:1787px;top:190px;width:1px;height:23px;background:#8a8a8a;"></div>
<span class="t" style="left:1619.30px;top:193.80px;font-size:16.5px;color:#000;letter-spacing:-0.130px;">Chemical Species</span>
<span class="t" style="left:1807.20px;top:193.80px;font-size:16.5px;color:#000;letter-spacing:-0.372px;">Ions [</span>
<span class="t" style="left:1847.30px;top:193.80px;font-size:16.5px;color:#000;letter-spacing:1.459px;font-style:italic;">m/z</span>
<span class="t" style="left:1877.80px;top:193.80px;font-size:16.5px;color:#000;">]</span>
<div class="b" style="left:1582px;top:213.5px;width:320.5px;height:24.5px;background:#0078d7;"></div>
<div class="b" style="left:1787px;top:213.5px;width:1px;height:24.5px;background:#e8f1fb;"></div>
<span class="t" style="left:1586.00px;top:217.60px;font-size:16.5px;color:#fff;letter-spacing:0.321px;">Calibrant</span>
<span class="t" style="left:1793.00px;top:217.60px;font-size:16.5px;color:#fff;letter-spacing:-1.061px;">124</span>
<div class="b" style="left:1582px;top:238px;width:320.5px;height:25.4px;background:#eeeeee;"></div>
<div class="b" style="left:1582px;top:263px;width:320.5px;height:0.8px;background:#dedede;"></div>
<div class="b" style="left:1787px;top:238px;width:1px;height:25.4px;background:#dcdcdc;"></div>
<span class="t" style="left:1586.00px;top:242.90px;font-size:16.5px;color:#000;letter-spacing:0.338px;">Internal Standard</span>
<span class="t" style="left:1792.30px;top:242.90px;font-size:16.5px;color:#000;letter-spacing:-0.761px;">230</span>
<div class="b" style="left:1571px;top:607px;width:342px;height:440px;background:#f0f0f0;"></div>
<div class="b" style="left:1571px;top:607px;width:1.6px;height:440px;background:#6e6e6e;"></div>
<div class="b" style="left:1572.6px;top:607px;width:339.4px;height:27px;background:#a0a0a0;"></div><div class="b" style="left:1572.6px;top:607px;width:339.4px;height:1px;background:#777777;"></div><div class="b" style="left:1572.6px;top:632.6px;width:339.4px;height:1.4px;background:#111;"></div><span class="t" style="left:1663.50px;top:611.80px;font-size:17px;color:#fff;letter-spacing:-0.006px;">Quantitative Analysis</span>
<div class="b" style="left:1641px;top:764px;width:202px;height:38px;background:#e1e1e1;border:1px solid #adadad;box-sizing:border-box;"></div>
<div class="b" style="left:1612px;top:821px;width:260px;height:38px;background:#e1e1e1;border:1px solid #adadad;box-sizing:border-box;"></div>
<div class="b" style="left:1664px;top:878px;width:156px;height:38px;background:#e1e1e1;border:1px solid #adadad;box-sizing:border-box;"></div>
<span class="t" style="left:1685.40px;top:773.90px;font-size:16.5px;color:#000;letter-spacing:0.060px;font-weight:700;">Save Calibration</span>
<span class="t" style="left:1656.10px;top:831.00px;font-size:16.5px;color:#000;letter-spacing:0.274px;font-weight:700;">Import Analyte File(s)...</span>
<span class="t" style="left:1686.30px;top:887.80px;font-size:16.5px;color:#000;letter-spacing:0.207px;font-weight:700;">Create Report</span>
<svg class="b" style="left:1666.5px;top:773px;" width="17" height="17" viewBox="0 0 17 17"><path d="M1 0.8 H14.2 L16 2.6 V16 H1Z" fill="#7e7e00" stroke="#111" stroke-width="1.3"/>
<rect x="3.6" y="1.4" width="9.2" height="7" fill="#c9c9c9" stroke="#444" stroke-width="0.5"/><rect x="4" y="10.6" width="9.4" height="5" fill="#111"/><rect x="9.8" y="11.6" width="2" height="3.4" fill="#d8d8d8"/></svg>
<svg class="b" style="left:1637px;top:829px;" width="19" height="18" viewBox="0 0 19 18"><path d="M1 5 H6 L7.5 6.5 H13 V8.5 H4 L1 15Z" fill="#8a8a00" stroke="#111" stroke-width="0.8"/>
<path d="M4.3 8.6 H17.6 L14 16 H0.8Z" fill="#8c8c10" stroke="#111" stroke-width="0.8"/><path d="M2.4 6.2 H5.6 L7 7.6 H10 V8 H3.6 L1.8 11.6Z" fill="#eded20"/>
<path d="M10.5 2.5 Q14 0 16.5 3.8" stroke="#111" stroke-width="1" fill="none"/><path d="M17.8 1.8 L16.8 5.6 L13.8 3.9Z" fill="#111"/></svg>
<div class="b" style="left:1914px;top:153px;width:1px;height:894px;background:#9c9ca4;"></div>
<div class="b" style="left:1912px;top:154px;width:2px;height:893px;background:#f4f4fa;"></div>
<div class="b" style="left:175px;top:1047px;width:1739px;height:1px;background:#b9b9c0;"></div>
<svg class="b" style="left:190px;top:1046px;" width="175" height="30" viewBox="0 0 175 30"><defs><linearGradient id="tg" x1="0" y1="0" x2="0" y2="1"><stop offset="0" stop-color="#a9d8f7"/><stop offset="1" stop-color="#e3f4fd"/></linearGradient></defs>
<path d="M7.5 0.5 H164 V25.5 Q164 27.5 162 27.5 H38 Q35.5 27.5 33.5 25.5 Z" fill="url(#tg)" stroke="#b5cbe0" stroke-width="0.8"/>
<path d="M146 9.5 L155.5 19 M155.5 9.5 L146 19" stroke="#000" stroke-width="1.9" fill="none"/></svg>
<span class="t" style="left:230.00px;top:1054.30px;font-size:13.5px;color:#000;letter-spacing:-0.246px;">22CALNAD_1_</span>
<div class="b" style="left:878px;top:603px;width:687px;height:444px;background:#ffffff;"></div>
<div class="b" style="left:878px;top:603px;width:687px;height:4px;background:#f0f0f0;"></div>
<div class="b" style="left:878.3px;top:607px;width:1.7px;height:440px;background:#6e6e6e;"></div>
<div class="b" style="left:880px;top:607px;width:685px;height:27px;background:#a0a0a0;"></div><div class="b" style="left:880px;top:607px;width:685px;height:1px;background:#777777;"></div><div class="b" style="left:880px;top:632.6px;width:685px;height:1.4px;background:#111;"></div><span class="t" style="left:1156.60px;top:611.80px;font-size:17px;color:#fff;letter-spacing:-0.034px;">Calibration Curve</span>
<svg class="b" style="left:880px;top:634px;font-family:'Liberation Sans',sans-serif;" width="685" height="413" viewBox="0 0 685 413"><rect x="73" y="0" width="612" height="334.6" fill="#ffeeee"/>
<rect x="92.52" y="16.95" width="572.88" height="325.87" fill="#f0fff0"/>
<path d="M87.50 0 V360.3 M116.50 0 V360.3 M145.50 0 V360.3 M174.50 0 V360.3 M203.50 0 V360.3 M232.50 0 V360.3 M261.50 0 V360.3 M290.50 0 V360.3 M318.50 0 V360.3 M347.50 0 V360.3 M376.50 0 V360.3 M405.50 0 V360.3 M434.50 0 V360.3 M463.50 0 V360.3 M492.50 0 V360.3 M521.50 0 V360.3 M549.50 0 V360.3 M578.50 0 V360.3 M607.50 0 V360.3 M636.50 0 V360.3 M665.50 0 V360.3 M72.4 343.50 H685 M72.4 310.50 H685 M72.4 277.50 H685 M72.4 245.50 H685 M72.4 212.50 H685 M72.4 180.50 H685 M72.4 147.50 H685 M72.4 114.50 H685 M72.4 82.50 H685 M72.4 49.50 H685 M72.4 16.50 H685" stroke="#d2d2d2" stroke-width="1" stroke-dasharray="1 1" fill="none"/>
<path d="M72.4 0 V360.3 H685" stroke="#000" stroke-width="1.3" fill="none"/>
<path d="M72.4 343.15 h-11.4 M72.4 310.53 h-7.3 M72.4 277.91 h-11.4 M72.4 245.29 h-7.3 M72.4 212.67 h-11.4 M72.4 180.05 h-7.3 M72.4 147.43 h-11.4 M72.4 114.81 h-7.3 M72.4 82.19 h-11.4 M72.4 49.57 h-7.3 M72.4 16.95 h-11.4 M87.90 360.3 v11.4 M232.28 360.3 v11.4 M376.65 360.3 v11.4 M521.03 360.3 v11.4 M665.40 360.3 v11.4" stroke="#000" stroke-width="1.55" fill="none"/>
<path d="M72.4 359.46 h-4 M72.4 326.84 h-4 M72.4 294.22 h-4 M72.4 261.60 h-4 M72.4 228.98 h-4 M72.4 196.36 h-4 M72.4 163.74 h-4 M72.4 131.12 h-4 M72.4 98.50 h-4 M72.4 65.88 h-4 M72.4 33.26 h-4 M116.77 360.3 v3 M145.65 360.3 v3 M174.53 360.3 v3 M203.40 360.3 v3 M261.15 360.3 v3 M290.03 360.3 v3 M318.90 360.3 v3 M347.78 360.3 v3 M405.53 360.3 v3 M434.40 360.3 v3 M463.28 360.3 v3 M492.15 360.3 v3 M549.90 360.3 v3 M578.78 360.3 v3 M607.65 360.3 v3 M636.53 360.3 v3" stroke="#000" stroke-width="1.1" fill="none"/>
<text x="58.30" y="348.45" font-size="17" fill="#000" text-anchor="end" textLength="9.03" lengthAdjust="spacing" >0</text>
<text x="58.30" y="283.21" font-size="17" fill="#000" text-anchor="end" textLength="18.06" lengthAdjust="spacing" >20</text>
<text x="58.30" y="217.97" font-size="17" fill="#000" text-anchor="end" textLength="18.06" lengthAdjust="spacing" >40</text>
<text x="58.30" y="152.73" font-size="17" fill="#000" text-anchor="end" textLength="18.06" lengthAdjust="spacing" >60</text>
<text x="58.30" y="87.49" font-size="17" fill="#000" text-anchor="end" textLength="18.06" lengthAdjust="spacing" >80</text>
<text x="58.30" y="22.25" font-size="17" fill="#000" text-anchor="end" textLength="27.09" lengthAdjust="spacing" >100</text>
<text x="88.20" y="381.40" font-size="17" fill="#000" text-anchor="middle" textLength="9.03" lengthAdjust="spacing" >0</text>
<text x="232.58" y="381.40" font-size="17" fill="#000" text-anchor="middle" textLength="18.06" lengthAdjust="spacing" >50</text>
<text x="376.95" y="381.40" font-size="17" fill="#000" text-anchor="middle" textLength="27.09" lengthAdjust="spacing" >100</text>
<text x="521.33" y="381.40" font-size="17" fill="#000" text-anchor="middle" textLength="27.09" lengthAdjust="spacing" >150</text>
<text x="665.70" y="381.40" font-size="17" fill="#000" text-anchor="middle" textLength="27.09" lengthAdjust="spacing" >200</text>
<text x="378.80" y="403.40" font-size="20" fill="#000" text-anchor="middle" >µg/mL</text>
<text transform="translate(20.3 179.5) rotate(-90)" font-size="20" text-anchor="middle">AUC Ratio [%]</text>
<path d="M92.52 343.84 L665.40 19.56" stroke="#2a2aff" stroke-width="1.25"/>
<rect x="186.10" y="283.50" width="8.4" height="8.4" fill="#ff9a00"/>
<circle cx="92.52" cy="342.22" r="3.9" fill="#000"/>
<circle cx="110.97" cy="333.40" r="3.9" fill="#000"/>
<circle cx="203.40" cy="282.45" r="3.9" fill="#000"/>
<circle cx="665.40" cy="16.95" r="3.9" fill="#000"/></svg>
<span class="t" style="left:970.00px;top:654.40px;font-size:16.5px;color:#000;letter-spacing:-0.299px;">R²=0.99991</span>
<span class="t" style="left:970.00px;top:676.80px;font-size:16.5px;color:#000;letter-spacing:-0.424px;">RMSE=0.37602 %</span>
<span class="t" style="left:970.00px;top:699.60px;font-size:16.5px;color:#000;letter-spacing:0.158px;">y=-1.01+0.50x</span>
<div class="b" style="left:179px;top:156px;width:1386px;height:446px;background:#ffffff;"></div>
<div class="b" style="left:179px;top:156px;width:1386px;height:2px;background:#707070;"></div>
<div class="b" style="left:179px;top:156px;width:2px;height:443.5px;background:#707070;"></div>
<div class="b" style="left:181px;top:599px;width:1384px;height:1px;background:#e2e2e2;"></div>
<div class="b" style="left:1563px;top:158px;width:2px;height:442px;background:#e4e4e4;"></div>
<div class="b" style="left:182px;top:159px;width:1379px;height:1px;background:#8c8c8c;"></div>
<div class="b" style="left:182px;top:159px;width:1px;height:25px;background:#8c8c8c;"></div>
<div class="b" style="left:185px;top:162px;width:1375px;height:21.5px;background:#724e4e;"></div>
<div class="b" style="left:182px;top:572px;width:1379px;height:1px;background:#8c8c8c;"></div>
<div class="b" style="left:182px;top:572px;width:1px;height:26.5px;background:#8c8c8c;"></div>
<div class="b" style="left:185px;top:575px;width:1375px;height:22px;background:#566055;"></div>
<svg class="b" style="left:179px;top:156px;font-family:'Liberation Sans',sans-serif;" width="1386" height="446" viewBox="0 0 1386 446"><rect x="285" y="31" width="24" height="331.8" fill="#b9d8b9"/>
<rect x="307.4" y="31" width="1.6" height="331.8" fill="#a3c2a3"/>
<rect x="605.2" y="28" width="16.2" height="334.8" fill="#fcaeae"/>
<rect x="619.8" y="28" width="1.6" height="334.8" fill="#e09c9c"/>
<rect x="605.2" y="2" width="16.2" height="26" fill="#f9abab"/>
<rect x="619.8" y="2" width="1.6" height="26" fill="#dc9a9a"/>
<rect x="605.2" y="29.8" width="16.2" height="1" fill="#ffd6d6"/>
<rect x="285" y="414" width="24" height="30" fill="#bddcbd"/>
<rect x="307.5" y="414" width="1.5" height="30" fill="#a5c4a5"/>
<path d="M93.8 31.2 V362.8 H1383.8" stroke="#000" stroke-width="1.3" fill="none"/>
<path d="M93.8 357.07 h-3.5 M93.8 347.50 h-11 M93.8 337.93 h-3.5 M93.8 328.36 h-3.5 M93.8 318.79 h-3.5 M93.8 309.22 h-3.5 M93.8 299.65 h-7 M93.8 290.08 h-3.5 M93.8 280.51 h-3.5 M93.8 270.94 h-3.5 M93.8 261.37 h-3.5 M93.8 251.80 h-11 M93.8 242.23 h-3.5 M93.8 232.66 h-3.5 M93.8 223.09 h-3.5 M93.8 213.52 h-3.5 M93.8 203.95 h-7 M93.8 194.38 h-3.5 M93.8 184.81 h-3.5 M93.8 175.24 h-3.5 M93.8 165.67 h-3.5 M93.8 156.10 h-11 M93.8 146.53 h-3.5 M93.8 136.96 h-3.5 M93.8 127.39 h-3.5 M93.8 117.82 h-3.5 M93.8 108.25 h-7 M93.8 98.68 h-3.5 M93.8 89.11 h-3.5 M93.8 79.54 h-3.5 M93.8 69.97 h-3.5 M93.8 60.40 h-11 M93.8 50.83 h-3.5 M93.8 41.26 h-3.5 M93.8 31.69 h-3.5" stroke="#000" stroke-width="1.25" fill="none"/>
<path d="M96.34 362.8 v3 M102.55 362.8 v3 M108.76 362.8 v3 M114.96 362.8 v5.5 M121.17 362.8 v3 M127.38 362.8 v3 M133.59 362.8 v3 M139.79 362.8 v3 M146.00 362.8 v9 M152.21 362.8 v3 M158.41 362.8 v3 M164.62 362.8 v3 M170.83 362.8 v3 M177.04 362.8 v5.5 M183.24 362.8 v3 M189.45 362.8 v3 M195.66 362.8 v3 M201.86 362.8 v3 M208.07 362.8 v9 M214.28 362.8 v3 M220.48 362.8 v3 M226.69 362.8 v3 M232.90 362.8 v3 M239.11 362.8 v5.5 M245.31 362.8 v3 M251.52 362.8 v3 M257.73 362.8 v3 M263.93 362.8 v3 M270.14 362.8 v9 M276.35 362.8 v3 M282.55 362.8 v3 M288.76 362.8 v3 M294.97 362.8 v3 M301.18 362.8 v5.5 M307.38 362.8 v3 M313.59 362.8 v3 M319.80 362.8 v3 M326.00 362.8 v3 M332.21 362.8 v9 M338.42 362.8 v3 M344.62 362.8 v3 M350.83 362.8 v3 M357.04 362.8 v3 M363.25 362.8 v5.5 M369.45 362.8 v3 M375.66 362.8 v3 M381.87 362.8 v3 M388.07 362.8 v3 M394.28 362.8 v9 M400.49 362.8 v3 M406.69 362.8 v3 M412.90 362.8 v3 M419.11 362.8 v3 M425.32 362.8 v5.5 M431.52 362.8 v3 M437.73 362.8 v3 M443.94 362.8 v3 M450.14 362.8 v3 M456.35 362.8 v9 M462.56 362.8 v3 M468.76 362.8 v3 M474.97 362.8 v3 M481.18 362.8 v3 M487.38 362.8 v5.5 M493.59 362.8 v3 M499.80 362.8 v3 M506.01 362.8 v3 M512.21 362.8 v3 M518.42 362.8 v9 M524.63 362.8 v3 M530.83 362.8 v3 M537.04 362.8 v3 M543.25 362.8 v3 M549.45 362.8 v5.5 M555.66 362.8 v3 M561.87 362.8 v3 M568.08 362.8 v3 M574.28 362.8 v3 M580.49 362.8 v9 M586.70 362.8 v3 M592.90 362.8 v3 M599.11 362.8 v3 M605.32 362.8 v3 M611.52 362.8 v5.5 M617.73 362.8 v3 M623.94 362.8 v3 M630.15 362.8 v3 M636.35 362.8 v3 M642.56 362.8 v9 M648.77 362.8 v3 M654.97 362.8 v3 M661.18 362.8 v3 M667.39 362.8 v3 M673.60 362.8 v5.5 M679.80 362.8 v3 M686.01 362.8 v3 M692.22 362.8 v3 M698.42 362.8 v3 M704.63 362.8 v9 M710.84 362.8 v3 M717.04 362.8 v3 M723.25 362.8 v3 M729.46 362.8 v3 M735.66 362.8 v5.5 M741.87 362.8 v3 M748.08 362.8 v3 M754.29 362.8 v3 M760.49 362.8 v3 M766.70 362.8 v9 M772.91 362.8 v3 M779.11 362.8 v3 M785.32 362.8 v3 M791.53 362.8 v3 M797.74 362.8 v5.5 M803.94 362.8 v3 M810.15 362.8 v3 M816.36 362.8 v3 M822.56 362.8 v3 M828.77 362.8 v9 M834.98 362.8 v3 M841.18 362.8 v3 M847.39 362.8 v3 M853.60 362.8 v3 M859.80 362.8 v5.5 M866.01 362.8 v3 M872.22 362.8 v3 M878.43 362.8 v3 M884.63 362.8 v3 M890.84 362.8 v9 M897.05 362.8 v3 M903.25 362.8 v3 M909.46 362.8 v3 M915.67 362.8 v3 M921.88 362.8 v5.5 M928.08 362.8 v3 M934.29 362.8 v3 M940.50 362.8 v3 M946.70 362.8 v3 M952.91 362.8 v9 M959.12 362.8 v3 M965.32 362.8 v3 M971.53 362.8 v3 M977.74 362.8 v3 M983.95 362.8 v5.5 M990.15 362.8 v3 M996.36 362.8 v3 M1002.57 362.8 v3 M1008.77 362.8 v3 M1014.98 362.8 v9 M1021.19 362.8 v3 M1027.39 362.8 v3 M1033.60 362.8 v3 M1039.81 362.8 v3 M1046.01 362.8 v5.5 M1052.22 362.8 v3 M1058.43 362.8 v3 M1064.64 362.8 v3 M1070.84 362.8 v3 M1077.05 362.8 v9 M1083.26 362.8 v3 M1089.46 362.8 v3 M1095.67 362.8 v3 M1101.88 362.8 v3 M1108.09 362.8 v5.5 M1114.29 362.8 v3 M1120.50 362.8 v3 M1126.71 362.8 v3 M1132.91 362.8 v3 M1139.12 362.8 v9 M1145.33 362.8 v3 M1151.53 362.8 v3 M1157.74 362.8 v3 M1163.95 362.8 v3 M1170.15 362.8 v5.5 M1176.36 362.8 v3 M1182.57 362.8 v3 M1188.78 362.8 v3 M1194.98 362.8 v3 M1201.19 362.8 v9 M1207.40 362.8 v3 M1213.60 362.8 v3 M1219.81 362.8 v3 M1226.02 362.8 v3 M1232.22 362.8 v5.5 M1238.43 362.8 v3 M1244.64 362.8 v3 M1250.85 362.8 v3 M1257.05 362.8 v3 M1263.26 362.8 v9 M1269.47 362.8 v3 M1275.67 362.8 v3 M1281.88 362.8 v3 M1288.09 362.8 v3 M1294.30 362.8 v5.5 M1300.50 362.8 v3 M1306.71 362.8 v3 M1312.92 362.8 v3 M1319.12 362.8 v3 M1325.33 362.8 v9 M1331.54 362.8 v3 M1337.74 362.8 v3 M1343.95 362.8 v3 M1350.16 362.8 v3 M1356.37 362.8 v5.5 M1362.57 362.8 v3 M1368.78 362.8 v3 M1374.99 362.8 v3 M1381.19 362.8 v3" stroke="#000" stroke-width="1.25" fill="none"/>
<text x="79.40" y="353.00" font-size="16" fill="#000" text-anchor="end" textLength="9.21" lengthAdjust="spacing" >0</text>
<text x="79.40" y="257.30" font-size="16" fill="#000" text-anchor="end" textLength="46.51" lengthAdjust="spacing" >1e+06</text>
<text x="79.40" y="161.60" font-size="16" fill="#000" text-anchor="end" textLength="46.51" lengthAdjust="spacing" >2e+06</text>
<text x="79.40" y="65.90" font-size="16" fill="#000" text-anchor="end" textLength="46.51" lengthAdjust="spacing" >3e+06</text>
<text x="145.70" y="383.90" font-size="16" fill="#000" text-anchor="middle" >4</text>
<text x="207.77" y="383.90" font-size="16" fill="#000" text-anchor="middle" >5</text>
<text x="269.84" y="383.90" font-size="16" fill="#000" text-anchor="middle" >6</text>
<text x="331.91" y="383.90" font-size="16" fill="#000" text-anchor="middle" >7</text>
<text x="393.98" y="383.90" font-size="16" fill="#000" text-anchor="middle" >8</text>
<text x="456.05" y="383.90" font-size="16" fill="#000" text-anchor="middle" >9</text>
<text x="518.12" y="383.90" font-size="16" fill="#000" text-anchor="middle" >10</text>
<text x="580.19" y="383.90" font-size="16" fill="#000" text-anchor="middle" >11</text>
<text x="642.26" y="383.90" font-size="16" fill="#000" text-anchor="middle" >12</text>
<text x="704.33" y="383.90" font-size="16" fill="#000" text-anchor="middle" >13</text>
<text x="766.40" y="383.90" font-size="16" fill="#000" text-anchor="middle" >14</text>
<text x="828.47" y="383.90" font-size="16" fill="#000" text-anchor="middle" >15</text>
<text x="890.54" y="383.90" font-size="16" fill="#000" text-anchor="middle" >16</text>
<text x="952.61" y="383.90" font-size="16" fill="#000" text-anchor="middle" >17</text>
<text x="1014.68" y="383.90" font-size="16" fill="#000" text-anchor="middle" >18</text>
<text x="1076.75" y="383.90" font-size="16" fill="#000" text-anchor="middle" >19</text>
<text x="1138.82" y="383.90" font-size="16" fill="#000" text-anchor="middle" >20</text>
<text x="1200.89" y="383.90" font-size="16" fill="#000" text-anchor="middle" >21</text>
<text x="1262.96" y="383.90" font-size="16" fill="#000" text-anchor="middle" >22</text>
<text x="1325.03" y="383.90" font-size="16" fill="#000" text-anchor="middle" >23</text>
<text x="738.30" y="404.70" font-size="20" fill="#000" text-anchor="middle" >min</text>
<text transform="translate(22 196.5) rotate(-90)" font-size="20" text-anchor="middle">intensity</text>
<path d="M113 50.3 h7.5" stroke="#ff4500" stroke-width="1.2"/>
<text x="126.20" y="55.75" font-size="15" fill="#ff4500" text-anchor="start" textLength="65.20" lengthAdjust="spacing" >NA_Cal B</text>
<path d="M113 67.6 h7.5" stroke="#a85000" stroke-width="1.2"/>
<text x="126.20" y="73.05" font-size="15" fill="#a85000" text-anchor="start" textLength="65.20" lengthAdjust="spacing" >NA_Cal A</text>
<path d="M113 84.9 h7.5" stroke="#10a010" stroke-width="1.2"/>
<text x="126.20" y="90.35" font-size="15" fill="#10a010" text-anchor="start" textLength="65.20" lengthAdjust="spacing" >NA_Cal B</text>
<path d="M113 102.2 h7.5" stroke="#0000ff" stroke-width="1.2"/>
<text x="126.20" y="107.65" font-size="15" fill="#0000ff" text-anchor="start" textLength="65.20" lengthAdjust="spacing" >NA_Cal C</text>
<path d="M113 119.5 h7.5" stroke="#000000" stroke-width="1.2"/>
<text x="126.20" y="124.95" font-size="15" fill="#000000" text-anchor="start" textLength="65.20" lengthAdjust="spacing" >NA_Cal D</text>
<path d="M288.30 347.50 L288.90 332.50 L289.40 244.50 L290.30 46.50 L290.90 46.50 L291.80 224.50 L292.60 314.50 L293.20 338.50 Q293.80 345.60 297.50 346.80 L307.00 347.50" fill="none" stroke="#a85000" stroke-width="1.2" stroke-linejoin="round"/>
<path d="M288.90 347.50 L289.90 255.50 L290.50 255.50 L291.90 322.50 L292.80 341.50 L295.50 347.10" fill="none" stroke="#ff4500" stroke-width="0.95"/>
<path d="M289.70 347.10 L290.50 340.30 L291.60 345.00 L294.20 347.10" fill="#ffffff" stroke="#1c1cff" stroke-width="1"/>
<path d="M289.90 347.50 L290.60 345.50 L292.00 347.30" fill="none" stroke="#000" stroke-width="0.8"/>
<path d="M610.90 347.50 L611.90 314.50 L612.90 199.50 L613.30 199.50 L614.20 314.50 L615.00 347.50" fill="#ff4500" stroke="#ff4500" stroke-width="1.1" stroke-linejoin="round"/>
<path d="M611.40 347.50 L612.20 314.50 L612.90 270.50 L613.90 324.50 L614.40 347.50" fill="none" stroke="#6a1c00" stroke-width="0.75"/>
<path d="M135.5 347.5 H1343" stroke="#ff4500" stroke-width="1.1"/>
<path d="M696 347.5 l1.5 -1.6 l1.5 1.6" stroke="#a0522d" stroke-width="0.9" fill="none"/>
<path d="M698 347.5 l1.5 -1.6 l1.5 1.6" stroke="#a0522d" stroke-width="0.9" fill="none"/>
<path d="M757 347.5 l1.5 -1.6 l1.5 1.6" stroke="#a0522d" stroke-width="0.9" fill="none"/></svg>
<span class="t" style="left:763.80px;top:163.30px;font-size:16.67px;color:#fff;letter-spacing:0.020px;">INTERNAL STANDARD BAR</span>
<span class="t" style="left:797.60px;top:575.30px;font-size:16.67px;color:#fff;letter-spacing:0.012px;">CALIBRATION BAR</span>
<svg class="b" style="left:1537px;top:160px;" width="24" height="24" viewBox="0 0 24 24"><rect x="0.5" y="0.5" width="23" height="23" fill="#fff" stroke="#000" stroke-width="1"/>
<path d="M8.2 3.9 h7.4" stroke="#111" stroke-width="1.3" fill="none"/>
<rect x="4.6" y="4.4" width="14.8" height="2.3" rx="0.8" fill="#0c0c0c"/>
<rect x="5.8" y="8.1" width="12.3" height="13.6" rx="0.6" fill="#0c0c0c"/>
<rect x="7.1" y="9.2" width="1.5" height="10.4" rx="0.7" fill="#9a9a9a"/><rect x="11.1" y="9.2" width="1.8" height="10.4" rx="0.8" fill="#9a9a9a"/><rect x="15.3" y="9.2" width="1.5" height="10.4" rx="0.7" fill="#9a9a9a"/></svg>
<svg class="b" style="left:1537px;top:573px;" width="24" height="24" viewBox="0 0 24 24"><rect x="0.5" y="0.5" width="23" height="23" fill="#fff" stroke="#000" stroke-width="1"/>
<path d="M8.2 3.9 h7.4" stroke="#111" stroke-width="1.3" fill="none"/>
<rect x="4.6" y="4.4" width="14.8" height="2.3" rx="0.8" fill="#0c0c0c"/>
<rect x="5.8" y="8.1" width="12.3" height="13.6" rx="0.6" fill="#0c0c0c"/>
<rect x="7.1" y="9.2" width="1.5" height="10.4" rx="0.7" fill="#9a9a9a"/><rect x="11.1" y="9.2" width="1.8" height="10.4" rx="0.8" fill="#9a9a9a"/><rect x="15.3" y="9.2" width="1.5" height="10.4" rx="0.7" fill="#9a9a9a"/></svg>
</body></html>
